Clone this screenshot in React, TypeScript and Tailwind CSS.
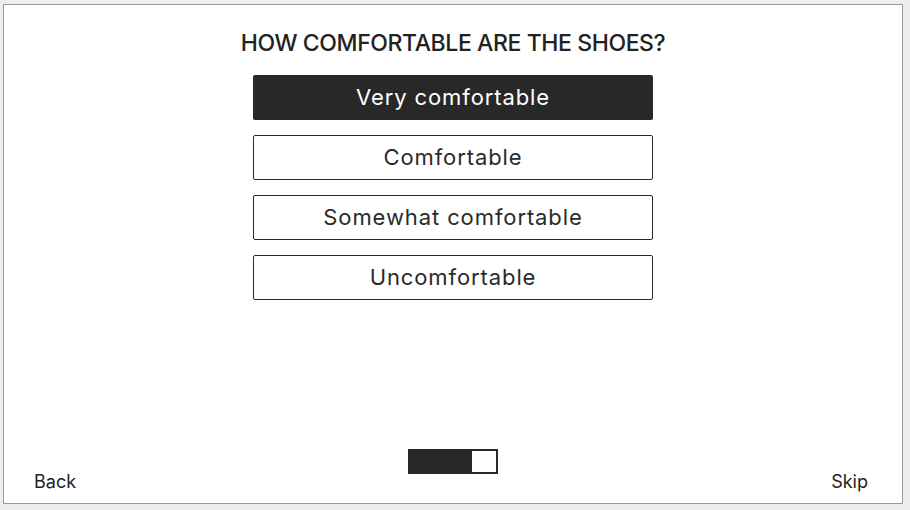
import React from "react"

const options = ["Very comfortable", "Comfortable", "Somewhat comfortable", "Uncomfortable"]

export default function App() {
  const selected = 0
  const font = { fontFamily: "Inter, 'Noto Sans', sans-serif" }

  return (
    <div className="w-[910px] h-[510px] bg-[#eeeeee] pt-[4px] pl-[3px]" style={font}>
      <div className="w-[900px] h-[500px] bg-white border border-[#9a9a9a] flex flex-col">
        <h1 className="mt-[24px] text-center text-[23px] leading-[28px] font-medium text-[#222] uppercase tracking-[-0.4px]">
          How comfortable are the shoes?
        </h1>

        <div className="mt-[18px] flex flex-col items-center gap-[15px]">
          {options.map((opt, i) => (
            <button
              key={opt}
              className={`w-[400px] h-[45px] rounded-[2px] text-[22px] tracking-[0.9px] ${
                i === selected
                  ? "bg-[#282828] text-white"
                  : "bg-white text-[#2a2a2a] border border-[#2a2a2a]"
              }`}
            >
              {opt}
            </button>
          ))}
        </div>

        <div className="flex-1" />

        {/* bottom nav */}
        <div className="grid grid-cols-3 items-end pl-[30px] pr-[34px] pb-[8px]">
          <span className="text-[18px] text-[#222] justify-self-start">Back</span>
          <div className="justify-self-center mb-[21px] w-[90px] h-[25px] border-2 border-[#282828] flex ml-[4px]">
            <div className="w-[62px] bg-[#282828]" />
          </div>
          <span className="text-[18px] text-[#222] justify-self-end">Skip</span>
        </div>
      </div>
    </div>
  )
}
